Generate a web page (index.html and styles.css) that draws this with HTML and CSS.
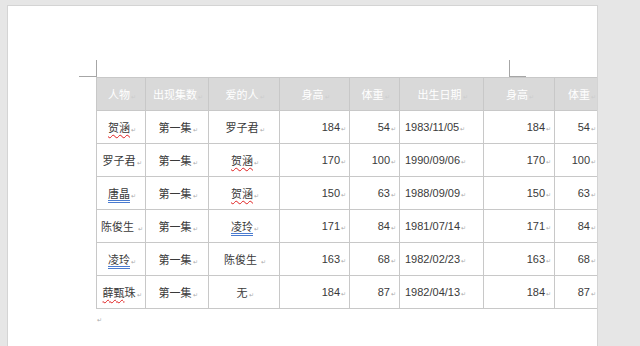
FILE: index.html
```html
<!DOCTYPE html>
<html lang="zh">
<head>
<meta charset="utf-8">
<title>表格</title>
<link rel="stylesheet" href="styles.css">
</head>
<body>
<div class="page">
  <span class="crop crop-lv"></span><span class="crop crop-lh"></span>
  <span class="crop crop-rv"></span><span class="crop crop-rh"></span>
  <table class="grid">
    <colgroup>
      <col class="w49"><col class="w63"><col class="w71"><col class="w70"><col class="w50"><col class="w84"><col class="w71"><col class="w45">
    </colgroup>
    <thead>
      <tr>
        <th>人物<i>↵</i></th><th>出现集数<i>↵</i></th><th>爱的人<i>↵</i></th><th>身高<i>↵</i></th><th>体重<i>↵</i></th><th>出生日期<i>↵</i></th><th>身高<i>↵</i></th><th class="clip">体重<i>↵</i></th>
      </tr>
    </thead>
    <tbody>
      <tr>
        <td class="c"><span class="wavy">贺涵</span><i>↵</i></td><td class="c">第一集<i>↵</i></td><td class="c">罗子君<i>↵</i></td>
        <td class="r">184<i>↵</i></td><td class="r">54<i>↵</i></td><td class="l">1983/11/05<i>↵</i></td><td class="r">184<i>↵</i></td><td class="r">54<i>↵</i></td>
      </tr>
      <tr>
        <td class="c">罗子君<i>↵</i></td><td class="c">第一集<i>↵</i></td><td class="c"><span class="wavy">贺涵</span><i>↵</i></td>
        <td class="r">170<i>↵</i></td><td class="r">100<i>↵</i></td><td class="l">1990/09/06<i>↵</i></td><td class="r">170<i>↵</i></td><td class="r">100<i>↵</i></td>
      </tr>
      <tr>
        <td class="c"><span class="dbl">唐晶</span><i>↵</i></td><td class="c">第一集<i>↵</i></td><td class="c"><span class="wavy">贺涵</span><i>↵</i></td>
        <td class="r">150<i>↵</i></td><td class="r">63<i>↵</i></td><td class="l">1988/09/09<i>↵</i></td><td class="r">150<i>↵</i></td><td class="r">63<i>↵</i></td>
      </tr>
      <tr>
        <td class="c">陈俊生 <i>↵</i></td><td class="c">第一集<i>↵</i></td><td class="c"><span class="dbl">凌玲</span><i>↵</i></td>
        <td class="r">171<i>↵</i></td><td class="r">84<i>↵</i></td><td class="l">1981/07/14<i>↵</i></td><td class="r">171<i>↵</i></td><td class="r">84<i>↵</i></td>
      </tr>
      <tr>
        <td class="c"><span class="dbl">凌玲</span><i>↵</i></td><td class="c">第一集<i>↵</i></td><td class="c">陈俊生 <i>↵</i></td>
        <td class="r">163<i>↵</i></td><td class="r">68<i>↵</i></td><td class="l">1982/02/23<i>↵</i></td><td class="r">163<i>↵</i></td><td class="r">68<i>↵</i></td>
      </tr>
      <tr>
        <td class="c"><span class="wavy">薛甄</span>珠<i>↵</i></td><td class="c">第一集<i>↵</i></td><td class="c">无<i>↵</i></td>
        <td class="r">184<i>↵</i></td><td class="r">87<i>↵</i></td><td class="l">1982/04/13<i>↵</i></td><td class="r">184<i>↵</i></td><td class="r">87<i>↵</i></td>
      </tr>
    </tbody>
  </table>
  <p class="endmark">↵</p>
</div>
</body>
</html>
```

FILE: styles.css
```css
html, body {
  margin: 0;
  padding: 0;
  background: #e6e6e6;
  height: 100%;
  overflow: hidden;
}
body {
  font-family: "Liberation Sans", "Noto Sans CJK SC", sans-serif;
}
.page {
  position: relative;
  margin: 5px 0 0 7px;
  width: 591px;
  height: calc(100vh - 5px);
  background: #fff;
  border: 1px solid #d4d4d4;
  border-bottom: none;
  overflow: hidden;
  padding: 71px 0 0 88px;
  box-sizing: border-box;
}
.crop {
  position: absolute;
  background: #a6a6a6;
}
.crop-lv { left: 88px; top: 54px; width: 1px; height: 17px; }
.crop-lh { left: 71px; top: 70px; width: 17px; height: 1px; }
.crop-rv { left: 501px; top: 54px; width: 1px; height: 17px; }
.crop-rh { left: 501px; top: 70px; width: 17px; height: 1px; }
.grid {
  border-collapse: collapse;
  table-layout: fixed;
  width: 503px;
  font-size: 11px;
  color: #3a3a3a;
}
.w49 { width: 49px; }
.w63 { width: 63px; }
.w71 { width: 71px; }
.w70 { width: 70px; }
.w50 { width: 50px; }
.w84 { width: 84px; }
.w45 { width: 45px; }
.grid th, .grid td {
  border: 1px solid #c8c8c8;
  height: 32px;
  padding: 0;
  white-space: nowrap;
  font-weight: normal;
}
.grid th {
  background: #d9d9d9;
  color: #fff;
  text-align: center;
  padding-left: 2px;
}
.grid th.clip {
  text-align: right;
  padding-right: 3px;
}
.grid td.c { text-align: center; padding-left: 2px; }
.grid td.r { text-align: right; padding-right: 3px; }
.grid td.l { text-align: left; padding-left: 5px; }
.grid i {
  font-style: normal;
  font-size: 6px;
  color: #aaa;
  margin-left: 1px;
}
.grid th i { color: #ccc; }
.wavy {
  text-decoration: underline wavy #e02020;
  text-decoration-thickness: 1px;
  text-underline-offset: 2px;
}
.dbl {
  text-decoration: underline double #4a7bd0;
  text-decoration-thickness: 1px;
  text-underline-offset: 2px;
}
.endmark {
  margin: 8px 0 0 1px;
  font-size: 6px;
  color: #aaa;
  line-height: 6px;
}
```
